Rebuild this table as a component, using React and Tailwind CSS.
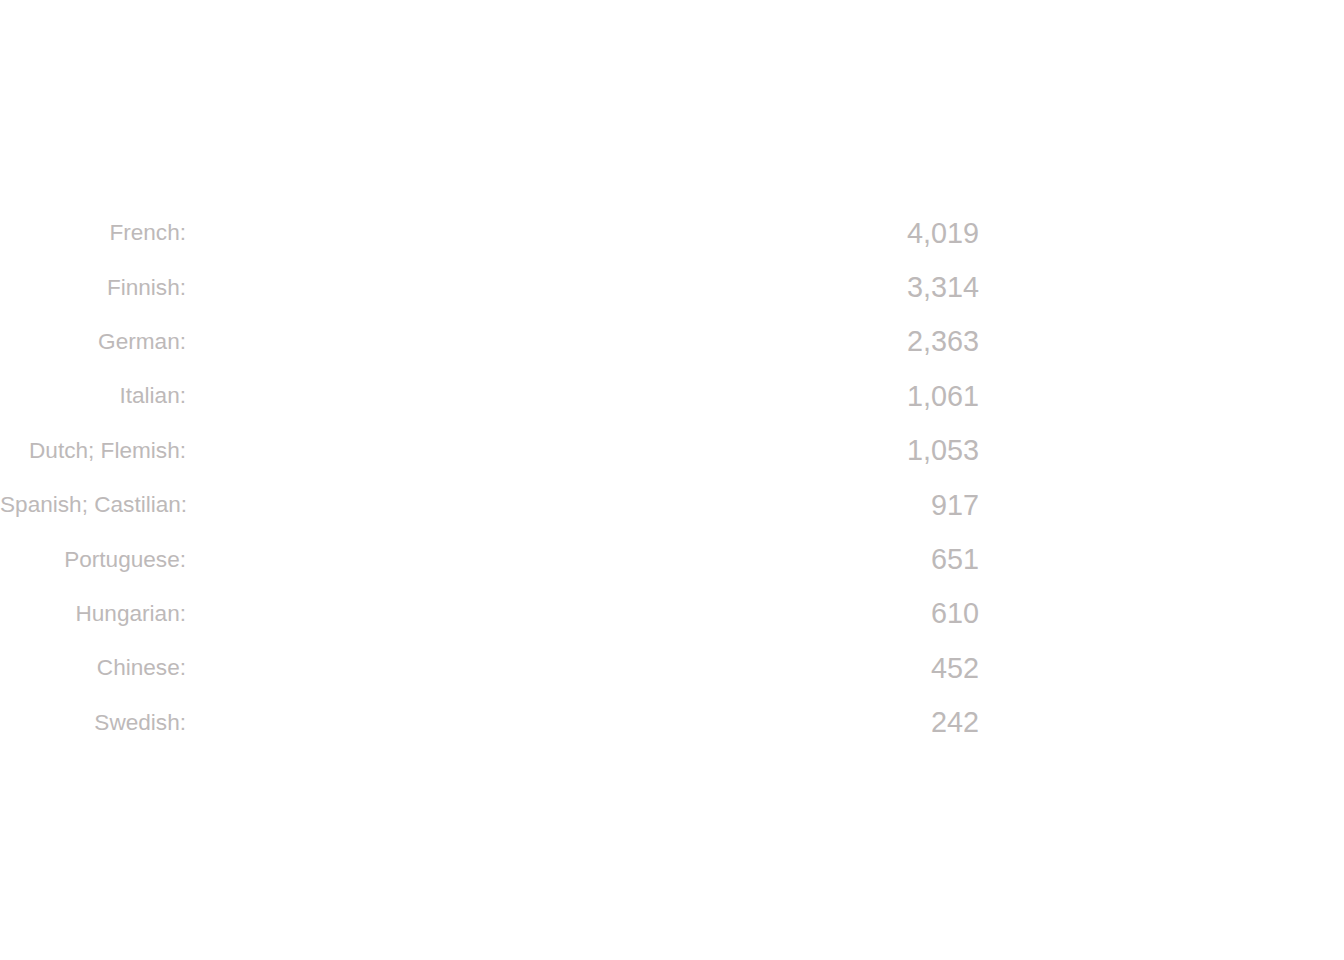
const rows = [
  ["French", "4,019"],
  ["Finnish", "3,314"],
  ["German", "2,363"],
  ["Italian", "1,061"],
  ["Dutch; Flemish", "1,053"],
  ["Spanish; Castilian", "917"],
  ["Portuguese", "651"],
  ["Hungarian", "610"],
  ["Chinese", "452"],
  ["Swedish", "242"],
];

export default function App() {
  return (
    <div className="min-h-screen w-full bg-white pt-[206px] font-['Liberation_Sans',Arial,sans-serif] text-[#bdb9b9]">
      {rows.map(([lang, count]) => (
        <div key={lang} className="flex h-[54.4px] items-center">
          <div className="w-[186px] shrink-0 text-right text-[22.6px] whitespace-nowrap">{lang}:</div>
          <div className="w-[793px] shrink-0 text-right text-[28.8px]">{count}</div>
        </div>
      ))}
    </div>
  );
}
